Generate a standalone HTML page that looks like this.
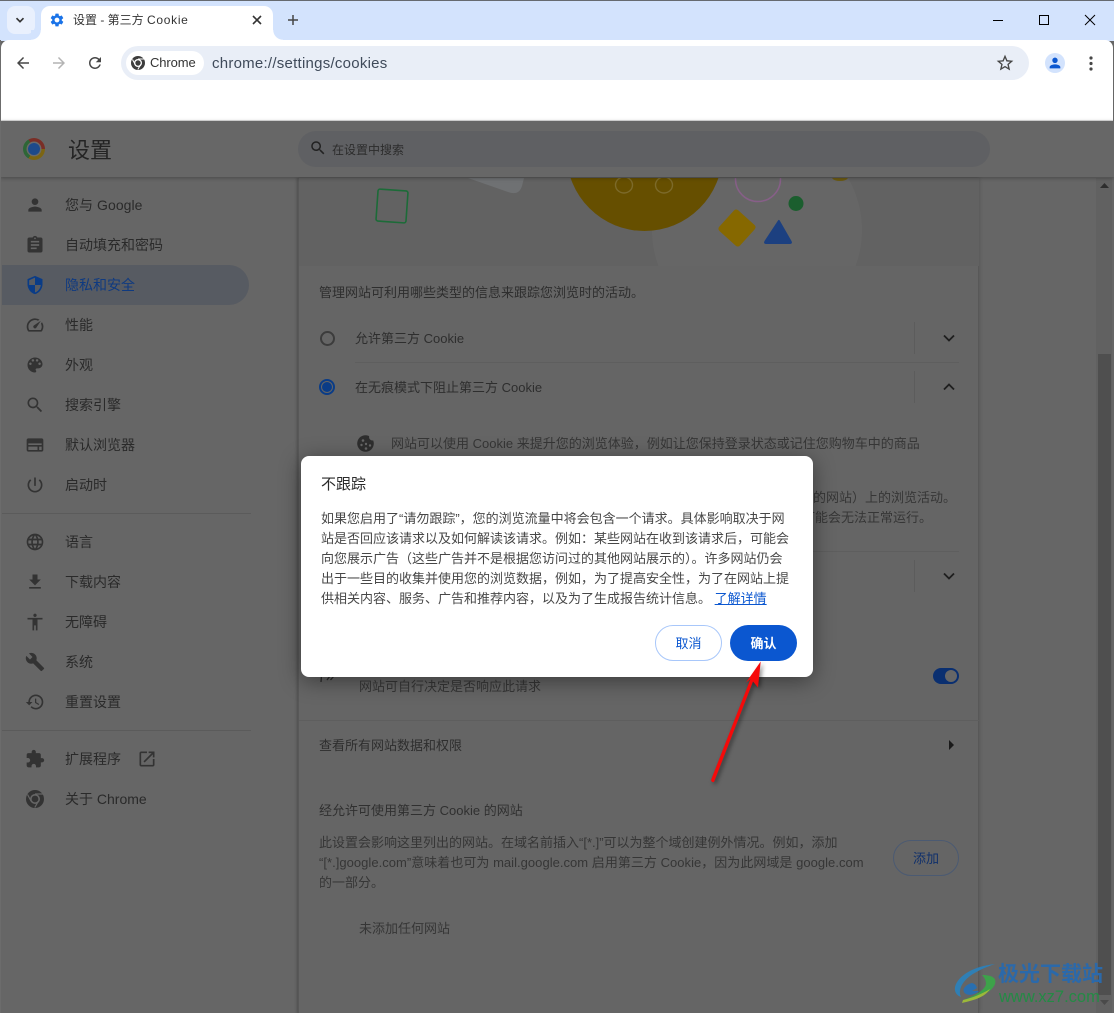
<!DOCTYPE html>
<html lang="zh-CN"><head><meta charset="utf-8"><title>设置 - 第三方 Cookie</title>
<style>
html,body{margin:0;padding:0;background:#666}
#r{position:relative;width:1114px;height:1013px;overflow:hidden;background:#666;font-family:"Liberation Sans","Noto Sans CJK SC",sans-serif;color:#2a2a2a}
.a{position:absolute}
.t{position:absolute;white-space:nowrap;line-height:20px;font-size:13px;color:#2e2e2e}
.s{position:absolute;white-space:nowrap;left:65px;line-height:20px;font-size:14px;color:#2a2a2a}
svg{position:absolute;overflow:visible}
.i{width:20px;height:20px;left:25px;fill:#333}
</style></head><body><div id="r">

<!-- tab strip -->
<div class="a" style="left:0;top:0;width:1114px;height:41px;background:#d3e3fd"></div>
<div class="a" style="left:0;top:0;width:1114px;height:1px;background:#666a70"></div>
<div class="a" style="left:7px;top:6px;width:28px;height:28px;border-radius:8px;background:#e9f0fd"></div>
<svg style="left:14px;top:14px" width="12" height="12" viewBox="0 0 12 12"><path d="M2.5 4.2L6 7.7l3.5-3.5" fill="none" stroke="#333" stroke-width="1.7"/></svg>
<div class="a" style="left:41px;top:6px;width:232px;height:36px;background:#fff;border-radius:9px 9px 0 0"></div>
<div class="a" style="left:31px;top:30px;width:10px;height:10px;background:radial-gradient(circle at 0 0,#d3e3fd 9.5px,#fff 10px)"></div>
<div class="a" style="left:273px;top:30px;width:10px;height:10px;background:radial-gradient(circle at 100% 0,#d3e3fd 9.5px,#fff 10px)"></div>
<svg style="left:49px;top:12px" width="16" height="16" viewBox="0 0 24 24" fill="#1a73e8"><path d="M19.14 12.94c.04-.3.06-.61.06-.94 0-.32-.02-.64-.07-.94l2.03-1.58c.18-.14.23-.41.12-.61l-1.92-3.32c-.12-.22-.37-.29-.59-.22l-2.39.96c-.5-.38-1.03-.7-1.62-.94l-.36-2.54c-.04-.24-.24-.41-.48-.41h-3.84c-.24 0-.43.17-.47.41l-.36 2.54c-.59.24-1.13.57-1.62.94l-2.39-.96c-.22-.08-.47 0-.59.22L2.74 8.87c-.12.21-.08.47.12.61l2.03 1.58c-.05.3-.09.63-.09.94s.02.64.07.94l-2.03 1.58c-.18.14-.23.41-.12.61l1.92 3.32c.12.22.37.29.59.22l2.39-.96c.5.38 1.03.7 1.62.94l.36 2.54c.05.24.24.41.48.41h3.84c.24 0 .44-.17.47-.41l.36-2.54c.59-.24 1.13-.56 1.62-.94l2.39.96c.22.08.47 0 .59-.22l1.92-3.32c.12-.22.07-.47-.12-.61l-2.01-1.58zM12 15.6c-1.98 0-3.6-1.62-3.6-3.6s1.62-3.6 3.6-3.6 3.6 1.62 3.6 3.6-1.62 3.6-3.6 3.6z"/></svg>
<div class="t" style="left:73px;top:10px;font-size:12px;color:#333">设置 - 第三方 <span style="letter-spacing:.7px">Cookie</span></div>
<svg style="left:252px;top:15px" width="10" height="10" viewBox="0 0 10 10"><path d="M1 1l8 8M9 1l-8 8" stroke="#333" stroke-width="1.6"/></svg>
<svg style="left:287px;top:14px" width="12" height="12" viewBox="0 0 12 12"><path d="M6 1v10M1 6h10" stroke="#444" stroke-width="1.5"/></svg>
<div class="a" style="left:993px;top:20px;width:10px;height:1px;background:#000"></div>
<div class="a" style="left:1039px;top:15px;width:8px;height:8px;border:1px solid #000"></div>
<svg style="left:1085px;top:15px" width="10" height="10" viewBox="0 0 10 10"><path d="M0 0l10 10M10 0L0 10" stroke="#000" stroke-width="1"/></svg>

<!-- dimmed page (below toolbar in stacking) -->
<div class="a" style="left:0;top:121px;width:1114px;height:892px;background:#666"></div>

<!-- main card -->
<div class="a" style="left:298px;top:178px;width:681px;height:835px;background:#656565;border-left:1px solid #585858;border-right:1px solid #585858;box-sizing:border-box;box-shadow:0 0 4px rgba(0,0,0,.22)"></div>

<!-- hero -->
<svg style="left:299px;top:178px;overflow:hidden" width="680" height="88" viewBox="299 178 680 88">
<rect x="299" y="178" width="680" height="88" fill="#626262"/>
<circle cx="757" cy="230" r="105" fill="#666"/>
<path d="M468 178L508 192Q519 196 522 186L524 178Z" fill="#6f7173"/>
<circle cx="644.5" cy="153" r="78" fill="#664f00"/>
<ellipse cx="624" cy="185" rx="8.5" ry="8" fill="none" stroke="#7c6a2a" stroke-width="1.4"/>
<ellipse cx="664" cy="185" rx="8.5" ry="8" fill="none" stroke="#7c6a2a" stroke-width="1.4"/>
<circle cx="758" cy="179" r="22.5" fill="none" stroke="#875f88" stroke-width="1.5"/>
<circle cx="796" cy="203.500" r="7.500" fill="#1b5e2e"/>
<rect x="723" y="214" width="28" height="28" rx="3" fill="#866800" transform="rotate(42 737 228)"/>
<path d="M778 220.500Q779 219 780 221L791.500 241Q793 244 789.500 244H766.500Q763 244 764.500 241Z" fill="#1c4080"/>
<rect x="377" y="190" width="30" height="32" rx="2" fill="none" stroke="#1c6b38" stroke-width="1.6" transform="rotate(4 392 206)"/>
<path d="M832 178h16q-2 3-8 3t-8-3z" fill="#6b5a12"/>
</svg>

<!-- toolbar -->
<div class="a" style="left:1px;top:40px;width:1112px;height:80px;background:#fff;border-radius:8px 8px 0 0"></div>
<div class="a" style="left:1px;top:120px;width:1112px;height:1px;background:#dcdcdc"></div>
<svg style="left:14px;top:54px" width="18" height="18" viewBox="0 0 24 24" fill="#474747"><path d="M20 11H7.83l5.59-5.59L12 4l-8 8 8 8 1.41-1.41L7.83 13H20v-2z"/></svg>
<svg style="left:50px;top:54px" width="18" height="18" viewBox="0 0 24 24" fill="#b4b4b4"><path d="M4 11h12.17l-5.59-5.59L12 4l8 8-8 8-1.41-1.41L16.17 13H4v-2z"/></svg>
<svg style="left:86px;top:54px" width="18" height="18" viewBox="0 0 24 24" fill="#474747"><path d="M17.65 6.35C16.2 4.9 14.21 4 12 4c-4.42 0-7.99 3.58-7.99 8s3.57 8 7.99 8c3.73 0 6.84-2.55 7.73-6h-2.08c-.82 2.33-3.04 4-5.65 4-3.31 0-6-2.69-6-6s2.69-6 6-6c1.66 0 3.14.69 4.22 1.78L13 11h7V4l-2.35 2.35z"/></svg>
<div class="a" style="left:121px;top:46px;width:908px;height:34px;border-radius:17px;background:#e9eef7"></div>
<div class="a" style="left:126px;top:51px;width:78px;height:24px;border-radius:12px;background:#fff"></div>
<svg style="left:131px;top:56px" width="14" height="14" viewBox="0 0 14 14"><circle cx="7" cy="7" r="7" fill="#3c3c3c"/><circle cx="7" cy="7" r="4" fill="#fff"/><circle cx="7" cy="7" r="2.7" fill="#3c3c3c"/><path d="M7 3H13M4.2 8.5L1.5 3.5M9.7 8.5L6.8 13.5" stroke="#fff" stroke-width="1"/></svg>
<div class="t" style="left:150px;top:53px;font-size:13px;letter-spacing:-.1px;color:#333">Chrome</div>
<div class="t" style="left:212px;top:54px;font-size:15px;letter-spacing:.25px;color:#3f4a5a">chrome://settings/cookies</div>
<svg style="left:995px;top:53px" width="20" height="20" viewBox="0 0 24 24" fill="#474747"><path d="M22 9.24l-7.19-.62L12 2 9.19 8.63 2 9.24l5.46 4.73L5.82 21 12 17.27 18.18 21l-1.63-7.03L22 9.24zM12 15.4l-3.76 2.27 1-4.28-3.32-2.88 4.38-.38L12 6.1l1.71 4.04 4.38.38-3.32 2.88 1 4.28L12 15.4z"/></svg>
<div class="a" style="left:1045px;top:53px;width:20px;height:20px;border-radius:50%;background:#d3e3fd"></div>
<svg style="left:1047px;top:55px" width="16" height="16" viewBox="0 0 24 24" fill="#0b57d0"><path d="M12 12c2.21 0 4-1.79 4-4s-1.79-4-4-4-4 1.79-4 4 1.79 4 4 4zm0 2c-2.67 0-8 1.34-8 4v2h16v-2c0-2.66-5.33-4-8-4z"/></svg>
<svg style="left:1089px;top:56px" width="4" height="15" viewBox="0 0 4 15" fill="#474747"><circle cx="2" cy="2" r="1.6"/><circle cx="2" cy="7.5" r="1.6"/><circle cx="2" cy="13" r="1.6"/></svg>

<div class="t" style="left:319px;top:283px">管理网站可利用哪些类型的信息来跟踪您浏览时的活动。</div>

<div class="a" style="left:320px;top:331px;width:11px;height:11px;border:2px solid #3c3c3c;border-radius:50%"></div>
<div class="t" style="left:355px;top:329px">允许第三方 Cookie</div>
<div class="a" style="left:914px;top:322px;width:1px;height:32px;background:#5c5c5c"></div>
<svg style="left:943px;top:333px" width="12" height="10" viewBox="0 0 12 10"><path d="M1 2.500l5 5 5-5" fill="none" stroke="#1e1e1e" stroke-width="1.800"/></svg>
<div class="a" style="left:355px;top:362px;width:604px;height:1px;background:#5e5e5e"></div>

<div class="a" style="left:319px;top:379px;width:12px;height:12px;border:2px solid #0a3c87;border-radius:50%"></div>
<div class="a" style="left:322px;top:382px;width:10px;height:10px;background:#0a3c87;border-radius:50%"></div>
<div class="t" style="left:355px;top:378px">在无痕模式下阻止第三方 Cookie</div>
<div class="a" style="left:914px;top:371px;width:1px;height:32px;background:#5c5c5c"></div>
<svg style="left:943px;top:382px" width="12" height="10" viewBox="0 0 12 10"><path d="M1 7.500l5-5 5 5" fill="none" stroke="#1e1e1e" stroke-width="1.800"/></svg>

<svg style="left:357px;top:435px" width="17" height="17" viewBox="0 0 17 17"><circle cx="8.500" cy="8.500" r="8.300" fill="#2e2e2e"/><circle cx="6" cy="5.500" r="1.300" fill="#666"/><circle cx="4.500" cy="10" r="1.200" fill="#666"/><circle cx="9" cy="9" r="1.200" fill="#666"/><circle cx="9" cy="13.500" r="1.300" fill="#666"/><circle cx="13" cy="10.500" r="1.200" fill="#666"/><circle cx="15.500" cy="2" r="3.500" fill="#656565"/></svg>
<div class="t" style="left:391px;top:434px;color:#363636">网站可以使用 Cookie 来提升您的浏览体验，例如让您保持登录状态或记住您购物车中的商品</div>
<div class="t" style="left:800px;top:488px;color:#363636">站的网站）上的浏览活动。</div>
<div class="t" style="left:802px;top:508px;color:#363636">可能会无法正常运行。</div>
<div class="a" style="left:355px;top:551px;width:604px;height:1px;background:#5e5e5e"></div>
<div class="a" style="left:914px;top:560px;width:1px;height:32px;background:#5c5c5c"></div>
<svg style="left:943px;top:571px" width="12" height="10" viewBox="0 0 12 10"><path d="M1 2.500l5 5 5-5" fill="none" stroke="#1e1e1e" stroke-width="1.800"/></svg>

<svg style="left:320px;top:676px" width="16" height="8" viewBox="0 0 16 8"><path d="M1.500 0L1 6M7 4L10 0M10.500 4L14 0" fill="none" stroke="#2a2a2a" stroke-width="1.300"/></svg>
<div class="t" style="left:359px;top:677px;color:#363636">网站可自行决定是否响应此请求</div>
<div class="a" style="left:933px;top:668px;width:26px;height:16px;border-radius:8px;background:#0a2f70"></div>
<div class="a" style="left:945px;top:670px;width:12px;height:12px;border-radius:50%;background:#666"></div>
<div class="a" style="left:299px;top:720px;width:680px;height:1px;background:#5e5e5e"></div>
<div class="t" style="left:319px;top:736px">查看所有网站数据和权限</div>
<svg style="left:949px;top:740px" width="5" height="10" viewBox="0 0 5 10"><path d="M0 0l5 5-5 5z" fill="#1a1a1a"/></svg>
<div class="t" style="left:319px;top:801px;color:#303030">经允许可使用第三方 Cookie 的网站</div>
<div class="t" style="left:319px;top:833px;color:#363636">此设置会影响这里列出的网站。在域名前插入“[*.]”可以为整个域创建例外情况。例如，添加</div>
<div class="t" style="left:319px;top:853px;letter-spacing:.03px;color:#363636">“[*.]google.com”意味着也可为 mail.google.com 启用第三方 Cookie，因为此网域是 google.com</div>
<div class="t" style="left:319px;top:873px;color:#363636">的一部分。</div>
<div class="a" style="left:893px;top:840px;width:66px;height:36px;box-sizing:border-box;border:1px solid #4b5a72;border-radius:18px;text-align:center;line-height:36px;font-size:13px;color:#10306b">添加</div>
<div class="t" style="left:359px;top:919px;color:#363636">未添加任何网站</div>

<!-- sidebar -->
<div class="a" style="left:2px;top:265px;width:247px;height:40px;background:#575b62;border-radius:0 20px 20px 0"></div>
<div class="a" style="left:2px;top:513px;width:249px;height:1px;background:#5b5b5b"></div>
<div class="a" style="left:2px;top:730px;width:249px;height:1px;background:#5b5b5b"></div>
<div class="a" style="left:295px;top:178px;width:3px;height:835px;background:linear-gradient(90deg,rgba(0,0,0,0),rgba(0,0,0,.1))"></div>

<svg class="i" style="top:195px" viewBox="0 0 24 24"><path d="M12 12c2.210 0 4-1.790 4-4s-1.790-4-4-4-4 1.790-4 4 1.790 4 4 4zm0 2c-2.670 0-8 1.340-8 4v2h16v-2c0-2.660-5.330-4-8-4z"/></svg>
<div class="s" style="top:195px;letter-spacing:.05px">您与 Google</div>
<svg class="i" style="top:235px" viewBox="0 0 24 24"><path d="M19 3h-4.180C14.400 1.840 13.300 1 12 1s-2.400.840-2.820 2H5c-1.100 0-2 .900-2 2v14c0 1.100.900 2 2 2h14c1.100 0 2-.900 2-2V5c0-1.100-.900-2-2-2zm-7 0c.550 0 1 .450 1 1s-.450 1-1 1-1-.450-1-1 .450-1 1-1zm2 14H7v-2h7v2zm3-4H7v-2h10v2zm0-4H7V7h10v2z"/></svg>
<div class="s" style="top:235px">自动填充和密码</div>
<svg class="i" style="top:275px;fill:#0a3c87" viewBox="0 0 24 24"><path d="M12 1L3 5v6c0 5.550 3.840 10.740 9 12 5.160-1.260 9-6.450 9-12V5l-9-4zm0 10.990h7c-.530 4.120-3.280 7.790-7 8.940V12H5V6.300l7-3.110v8.800z"/></svg>
<div class="s" style="top:275px;color:#0f3a80">隐私和安全</div>
<svg class="i" style="top:315px" viewBox="0 0 24 24"><path d="M20.380 8.570l-1.230 1.850a8 8 0 0 1-.22 7.580H5.070A8 8 0 0 1 15.580 6.850l1.850-1.230A10 10 0 0 0 3.350 19a2 2 0 0 0 1.720 1h13.850a2 2 0 0 0 1.740-1 10 10 0 0 0-.27-10.440zm-9.790 6.840a2 2 0 0 0 2.830 0l5.660-8.490-8.490 5.660a2 2 0 0 0 0 2.830z"/></svg>
<div class="s" style="top:315px">性能</div>
<svg class="i" style="top:355px" viewBox="0 0 24 24"><path d="M12 3c-4.970 0-9 4.030-9 9s4.030 9 9 9c.830 0 1.500-.670 1.500-1.500 0-.390-.150-.740-.390-1.010-.230-.260-.380-.610-.380-.990 0-.830.670-1.500 1.500-1.500H16c2.760 0 5-2.240 5-5 0-4.420-4.030-8-9-8zm-5.500 9c-.830 0-1.500-.670-1.500-1.500S5.670 9 6.500 9 8 9.670 8 10.500 7.330 12 6.500 12zm3-4C8.670 8 8 7.330 8 6.500S8.670 5 9.500 5s1.500.670 1.500 1.500S10.330 8 9.500 8zm5 0c-.830 0-1.500-.670-1.500-1.500S13.670 5 14.500 5s1.500.670 1.500 1.500S15.330 8 14.500 8zm3 4c-.830 0-1.500-.670-1.500-1.500S16.670 9 17.500 9s1.500.670 1.500 1.500-.670 1.500-1.500 1.500z"/></svg>
<div class="s" style="top:355px">外观</div>
<svg class="i" style="top:395px" viewBox="0 0 24 24"><path d="M15.500 14h-.790l-.280-.270C15.410 12.590 16 11.110 16 9.500 16 5.910 13.090 3 9.500 3S3 5.910 3 9.500 5.910 16 9.500 16c1.610 0 3.090-.590 4.230-1.570l.270.280v.790l5 4.990L20.490 19l-4.990-5zm-6 0C7.010 14 5 11.990 5 9.500S7.010 5 9.500 5 14 7.010 14 9.500 11.990 14 9.500 14z"/></svg>
<div class="s" style="top:395px">搜索引擎</div>
<svg class="i" style="top:435px" viewBox="0 0 24 24"><path fill-rule="evenodd" d="M20 4H4c-1.100 0-2 .900-2 2v12c0 1.100.900 2 2 2h16c1.100 0 2-.900 2-2V6c0-1.100-.900-2-2-2zM4 10h16v2H4zm0 4h11v4H4zm13 0h3v4h-3z"/></svg>
<div class="s" style="top:435px">默认浏览器</div>
<svg class="i" style="top:475px" viewBox="0 0 24 24"><path d="M13 3h-2v10h2V3zm4.830 2.170l-1.420 1.420C17.990 7.860 19 9.810 19 12c0 3.870-3.130 7-7 7s-7-3.130-7-7c0-2.190 1.010-4.140 2.580-5.420L6.170 5.170C4.230 6.820 3 9.260 3 12c0 4.970 4.030 9 9 9s9-4.030 9-9c0-2.740-1.230-5.180-3.170-6.830z"/></svg>
<div class="s" style="top:475px">启动时</div>
<svg class="i" style="top:532px" viewBox="0 0 24 24"><path d="M11.990 2C6.470 2 2 6.480 2 12s4.470 10 9.990 10C17.520 22 22 17.520 22 12S17.520 2 11.990 2zm6.930 6h-2.950c-.320-1.250-.780-2.450-1.380-3.560 1.840.630 3.370 1.910 4.330 3.560zM12 4.040c.830 1.200 1.480 2.530 1.910 3.960h-3.820c.430-1.430 1.080-2.760 1.910-3.960zM4.260 14C4.100 13.360 4 12.690 4 12s.100-1.360.260-2h3.380c-.080.660-.140 1.320-.140 2 0 .680.060 1.340.140 2H4.260zm.820 2h2.950c.320 1.250.780 2.450 1.380 3.560-1.840-.630-3.370-1.900-4.330-3.560zm2.950-8H5.080c.960-1.660 2.490-2.930 4.330-3.560C8.810 5.550 8.350 6.750 8.030 8zM12 19.960c-.830-1.200-1.480-2.530-1.910-3.960h3.820c-.430 1.430-1.080 2.760-1.910 3.960zM14.340 14H9.660c-.090-.660-.160-1.320-.160-2 0-.680.070-1.350.160-2h4.680c.090.650.160 1.320.160 2 0 .680-.070 1.340-.160 2zm.250 5.560c.600-1.110 1.060-2.310 1.380-3.560h2.950c-.960 1.650-2.490 2.930-4.330 3.560zM16.360 14c.080-.660.140-1.320.140-2 0-.680-.060-1.340-.140-2h3.380c.160.640.260 1.310.260 2s-.100 1.360-.260 2h-3.380z"/></svg>
<div class="s" style="top:532px">语言</div>
<svg class="i" style="top:572px" viewBox="0 0 24 24"><path d="M19 9h-4V3H9v6H5l7 7 7-7zM5 18v2h14v-2H5z"/></svg>
<div class="s" style="top:572px">下载内容</div>
<svg class="i" style="top:612px" viewBox="0 0 24 24"><path d="M12 2c1.100 0 2 .900 2 2s-.900 2-2 2-2-.900-2-2 .900-2 2-2zm9 7h-6v13h-2v-6h-2v6H9V9H3V7h18v2z"/></svg>
<div class="s" style="top:612px">无障碍</div>
<svg class="i" style="top:652px" viewBox="0 0 24 24"><path d="M22.700 19l-9.100-9.100c.900-2.300.400-5-1.500-6.900-2-2-5-2.400-7.400-1.300L9 6 6 9 1.600 4.700C.400 7.100.900 10.100 2.900 12.100c1.900 1.900 4.600 2.400 6.900 1.500l9.100 9.100c.400.400 1 .400 1.400 0l2.300-2.300c.500-.400.500-1.100.100-1.400z"/></svg>
<div class="s" style="top:652px">系统</div>
<svg class="i" style="top:692px" viewBox="0 0 24 24"><path d="M13 3c-4.970 0-9 4.030-9 9H1l3.890 3.890.070.140L9 12H6c0-3.870 3.130-7 7-7s7 3.130 7 7-3.130 7-7 7c-1.930 0-3.680-.790-4.940-2.060l-1.420 1.420C8.270 19.990 10.510 21 13 21c4.970 0 9-4.030 9-9s-4.030-9-9-9zm-1 5v5l4.280 2.540.720-1.210-3.500-2.080V8H12z"/></svg>
<div class="s" style="top:692px">重置设置</div>
<svg class="i" style="top:749px" viewBox="0 0 24 24"><path d="M20.500 11H19V7c0-1.100-.900-2-2-2h-4V3.500C13 2.120 11.880 1 10.500 1S8 2.120 8 3.500V5H4c-1.100 0-1.990.900-1.990 2v3.800H3.500c1.490 0 2.700 1.210 2.700 2.700s-1.210 2.700-2.700 2.700H2V20c0 1.100.900 2 2 2h3.800v-1.500c0-1.490 1.210-2.700 2.700-2.700 1.490 0 2.700 1.210 2.700 2.700V22H17c1.100 0 2-.900 2-2v-4h1.500c1.380 0 2.500-1.120 2.500-2.500S21.880 11 20.500 11z"/></svg>
<div class="s" style="top:749px">扩展程序</div>
<svg style="left:137px;top:749px;fill:#333" width="20" height="20" viewBox="0 0 24 24"><path d="M19 19H5V5h7V3H5c-1.110 0-2 .900-2 2v14c0 1.100.890 2 2 2h14c1.100 0 2-.900 2-2v-7h-2v7zM14 3v2h3.590l-9.830 9.830 1.410 1.410L19 6.410V10h2V3h-7z"/></svg>
<svg style="left:26px;top:790px" width="18" height="18" viewBox="0 0 18 18"><circle cx="9" cy="9" r="9" fill="#333"/><circle cx="9" cy="9" r="5" fill="#666"/><circle cx="9" cy="9" r="3.400" fill="#333"/><path d="M9 4H17M5 11L1.500 4.500M12.500 11L8.800 17.500" stroke="#666" stroke-width="1.200"/></svg>
<div class="s" style="top:789px">关于 Chrome</div>

<!-- scrollbar -->
<div class="a" style="left:1096px;top:178px;width:16px;height:835px;background:#616161"></div>
<div class="a" style="left:1098px;top:354px;width:13px;height:641px;background:#4f4f4f"></div>
<svg style="left:1100px;top:183px" width="9" height="5" viewBox="0 0 9 5"><path d="M4.500 0L9 5H0z" fill="#2d2d2d"/></svg>
<svg style="left:1100px;top:1000px" width="9" height="5" viewBox="0 0 9 5"><path d="M4.500 5L9 0H0z" fill="#4a4a4a"/></svg>

<!-- header -->
<div class="a" style="left:0;top:121px;width:1114px;height:56px;background:#676767;box-shadow:0 1px 4px rgba(0,0,0,.3)"></div>
<div class="a" style="left:23px;top:138px;width:22px;height:22px;border-radius:50%;background:conic-gradient(from -30deg,#7a2e26 0 120deg,#7c6512 120deg 240deg,#2e6636 240deg 360deg)"></div>
<div class="a" style="left:28px;top:143px;width:12px;height:12px;border-radius:50%;background:#1d4a8a;border:0;box-shadow:0 0 0 1.500px #6a6a6a"></div>
<div class="t" style="left:68px;top:137px;font-size:22px;line-height:28px;color:#242424">设置</div>
<div class="a" style="left:298px;top:131px;width:692px;height:36px;border-radius:18px;background:#5f6063"></div>
<svg style="left:309px;top:139px" width="18" height="18" viewBox="0 0 24 24" fill="#222"><path d="M15.500 14h-.790l-.280-.270C15.410 12.590 16 11.110 16 9.500 16 5.910 13.090 3 9.500 3S3 5.910 3 9.500 5.910 16 9.500 16c1.610 0 3.090-.590 4.230-1.570l.270.280v.790l5 4.990L20.490 19l-4.990-5zm-6 0C7.010 14 5 11.990 5 9.500S7.010 5 9.500 5 14 7.010 14 9.500 11.990 14 9.500 14z"/></svg>
<div class="t" style="left:332px;top:140px;font-size:12px;color:#2c2c2c">在设置中搜索</div>

<!-- edges -->
<div class="a" style="left:0;top:40px;width:1px;height:973px;background:#6c6c6c"></div>

<!-- dialog -->
<div class="a" style="left:301px;top:456px;width:512px;height:221px;background:#fff;border-radius:8px;box-shadow:0 4px 22px rgba(0,0,0,.42)"></div>
<div class="t" style="left:321px;top:475px;font-size:15px;color:#2b2b2b">不跟踪</div>
<div class="t" style="left:321px;top:509px;color:#474747">如果您启用了“请勿跟踪”，您的浏览流量中将会包含一个请求。具体影响取决于网</div>
<div class="t" style="left:321px;top:529px;color:#474747">站是否回应该请求以及如何解读该请求。例如：某些网站在收到该请求后，可能会</div>
<div class="t" style="left:321px;top:549px;color:#474747">向您展示广告（这些广告并不是根据您访问过的其他网站展示的）。许多网站仍会</div>
<div class="t" style="left:321px;top:569px;color:#474747">出于一些目的收集并使用您的浏览数据，例如，为了提高安全性，为了在网站上提</div>
<div class="t" style="left:321px;top:589px;color:#474747">供相关内容、服务、广告和推荐内容，以及为了生成报告统计信息。 <span style="color:#0b57d0;text-decoration:underline">了解详情</span></div>
<div class="a" style="left:655px;top:625px;width:67px;height:36px;box-sizing:border-box;border:1px solid #a8c7fa;border-radius:18px;background:#fff;text-align:center;line-height:36px;font-size:13px;color:#0b57d0">取消</div>
<div class="a" style="left:730px;top:625px;width:67px;height:36px;border-radius:18px;background:#0b57d0;text-align:center;line-height:38px;font-size:13px;color:#fff;font-weight:bold">确认</div>

<!-- arrow -->
<svg style="left:700px;top:650px;filter:drop-shadow(2px 2px 2px rgba(0,0,0,.45))" width="70" height="140" viewBox="700 650 70 140"><path d="M760.700 661.500L758 687.500L753 681.500L714 782Q711.500 782.500 711 780L750.500 679L746 682.500Z" fill="#f50a0a"/></svg>

<!-- watermark -->
<svg style="left:955px;top:963px" width="44" height="42" viewBox="955 963 44 42">
<path d="M995 964C975 966 958 975 955 987C954 993 958 996 961 997C958 991 961 983 970 976C977 971 986 967 995 964Z" fill="#2f7fb5"/>
<path d="M972 983C964 985 961 991 966 994C970 996 976 994 979 991L972 991L977 988C976 985 975 984 972 983Z" fill="#2a6fb0"/>
<path d="M982 975C992 975 997 978 995 984C992 992 980 998 963 1000C975 996 985 990 986 984C986 980 984 977 982 975Z" fill="#3da24a"/>
<path d="M963 1000C972 998 982 994 990 989C985 997 975 1000 962 1003Z" fill="#9cb83a"/>
</svg>
<div class="t" style="left:998px;top:961px;font-size:21px;line-height:28px;font-weight:bold;color:#2b69aa">极光下载站</div>
<div class="t" style="left:999px;top:986px;font-size:16.500px;line-height:22px;color:#248a45">www.xz7.com</div>

</div></body></html>
